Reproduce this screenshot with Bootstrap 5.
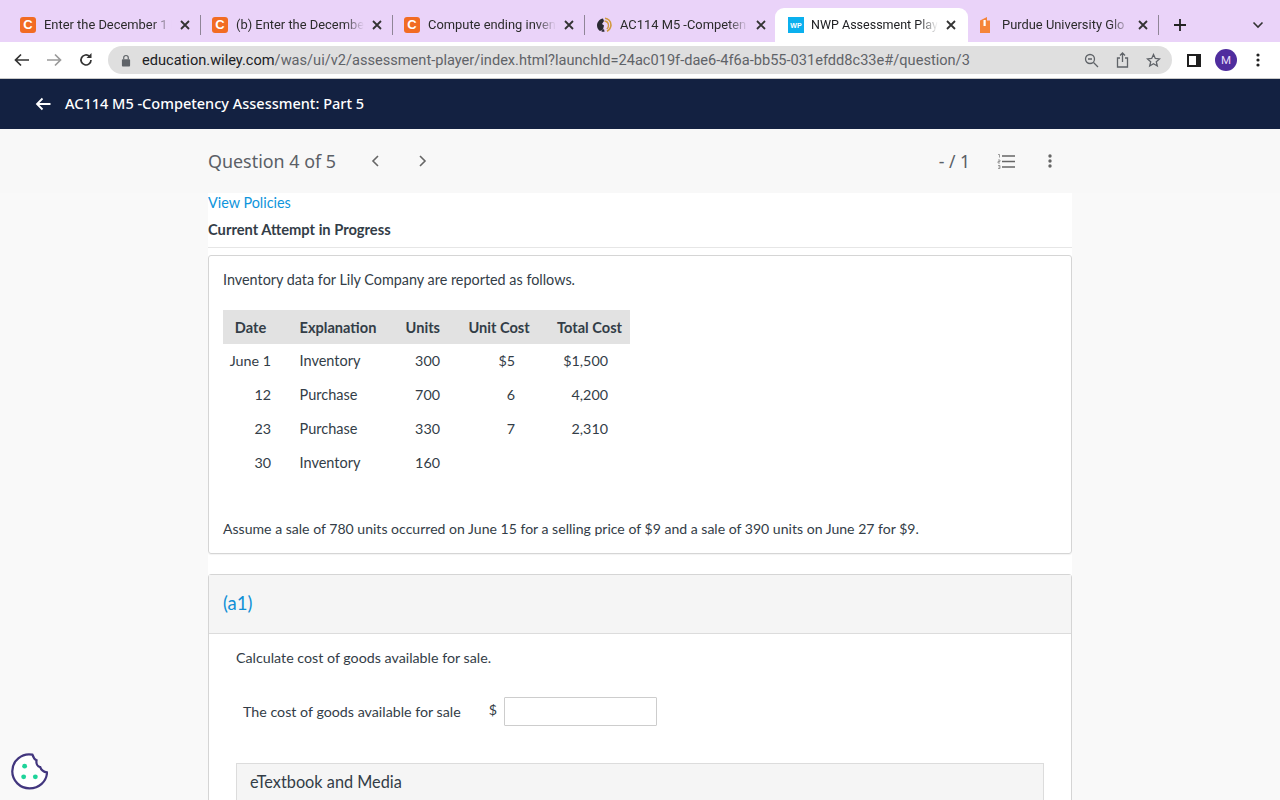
<!DOCTYPE html>
<html lang="en">
<head>
<meta charset="utf-8">
<title>NWP Assessment Player</title>
<link href="https://cdn.jsdelivr.net/npm/bootstrap@5.3.0/dist/css/bootstrap.min.css" rel="stylesheet">
<style>
html,body{height:800px;overflow:hidden}
body{background:#f9f9f9;font-family:Lato,sans-serif;color:#333d47;font-size:14.25px;position:relative}
.tabstrip{height:42px;background:#ead3f9;font-family:Roboto,sans-serif;font-size:12.9px;color:#2b2b2b;padding:8px 8px 0 9px}
.chrometab{width:191px;height:34px;padding:0 10px 0 11px;flex:none;position:relative}
.chrometab.on{background:#fff;border-radius:9px 9px 0 0;width:193px;margin-left:-1px;margin-right:-1px;color:#202124;padding-left:13px;padding-right:12px;font-size:12.5px}
.chrometab .ttl{flex:1;min-width:0;white-space:nowrap;overflow:hidden;margin-left:8px;-webkit-mask-image:linear-gradient(to right,#000 82%,transparent 97%);mask-image:linear-gradient(to right,#000 82%,transparent 97%)}
.chrometab.on .ttl{margin-left:7px}
.chrometab .xx{width:10px;height:10px;flex:none;margin-left:4px}
.chrometab.purdue{padding-left:13px}
.chrometab.purdue .ttl{margin-left:12px}
.tabsep{width:1px;height:20px;background:#8f8597;flex:none;align-self:center}
.favc{width:16px;height:16px;border-radius:3px;background:#f26c23;color:#fff;font-size:13px;font-weight:700;line-height:16px;text-align:center;flex:none;font-family:"Liberation Sans",sans-serif}
.favglobe{width:16px;height:16px;flex:none}
.favwp{width:16px;height:16px;flex:none}
.gapplus{margin-left:14px}
.addrrow{height:36px;background:#fff;padding:0 14px 0 14px}
.navfwd{margin-left:16px}
.navreload{margin-left:16px}
.omni{width:1064px;height:28px;border-radius:14px;background:#dfdfdf;font-family:Roboto,sans-serif;font-size:14.6px;color:#5f6368;padding:0 11px 0 13px;margin-left:14px;white-space:nowrap}
.omni b{font-weight:400;color:#202124}
.urltext{padding-top:1px}
.lockic{margin-right:11px}
.omnishare{margin:0 17px}
.panelic{margin-left:15px}
.avatar{width:22px;height:22px;border-radius:50%;background:#4f2d9e;color:#e6ddf8;font-size:11.5px;line-height:22px;text-align:center;font-family:Roboto,sans-serif;margin-left:14px}
.dotsic{margin-left:19px}
.divline{height:1px;background:#c9c9c9}
.appbar{height:50px;background:#132141;color:#fff;font-family:"Noto Sans",sans-serif;font-size:14.5px;font-weight:500;padding-left:35px}
.appback{margin-right:14px}
.qhead{height:64px;background:#f8f8f8;padding:0 208px}
.qtitle{font-family:"Noto Sans",sans-serif;font-size:17.9px;color:#5b6066;width:153px}
.nextic{margin-left:17px}
.qscore{font-family:"Noto Sans",sans-serif;font-size:17.5px;color:#5b6066;margin-left:auto;margin-right:27px}
.moreic{margin-left:33px;margin-right:20px}
.sheetwrap{width:864px;margin-left:208px;background:#fff;height:607px;overflow:hidden}
.polink{display:block;color:#0f95dc;text-decoration:none;line-height:20px;height:20px;font-size:14.4px}
.attempt{font-weight:700;font-size:14.7px;line-height:20px;margin-top:6px;padding-bottom:8px;border-bottom:1px solid #e6e6e6}
.promptbox{margin-top:7px;height:299px;border:1px solid #d5d5d5;border-radius:3px;padding:14px 13px 0 14px;box-shadow:0 1px 1px rgba(0,0,0,.05)}
.promptbox p{margin:0;line-height:20px}
.lead-in{font-size:14.38px}
.closing{font-size:14.07px}
.invtable{border-collapse:collapse;table-layout:fixed;width:407px;margin-top:20px;margin-bottom:39px;font-size:14.3px}
.invtable th{background:#e2e2e2;font-weight:700;height:34px;padding:1px 0 0;font-size:14.6px}
.invtable td{height:34px;padding:0}
.c1{width:55px}.c2{width:114px}.c3{width:62px}.c4{width:90px}.c5{width:86px}
.invtable .d1{text-align:right;padding-right:7px}
.invtable .d2{padding-left:21.5px}
.invtable td.d2{font-size:14.5px}
.invtable .d3{text-align:right;padding-right:14px}
.invtable .d4{text-align:right;padding-right:29px}
.invtable .d5{text-align:right;padding-right:22px}
.invtable th.d5h{text-align:right;padding-right:8px}
.partbox{margin-top:20px;border:1px solid #d5d5d5;border-radius:3px 3px 0 0;height:300px}
.parthead{height:59px;background:#f5f5f5;border-bottom:1px solid #dcdcdc;padding-left:14px;color:#0f8fd6;font-size:18.5px}
.partbody{padding:14px 27px 0 27px}
.partbody p{margin:0;line-height:20px}
.fillrow{margin-top:29px;padding-left:7px}
.dollarsign{margin-left:28px;margin-top:-4px}
.fillin{width:153px;height:29px;border:1px solid #cdcdcd;border-radius:1px;background:#fff;margin-left:7px}
.mediahd{margin-top:37px;height:60px;background:#f5f5f5;border:1px solid #dcdcdc;padding:6px 13px;font-size:16.3px;line-height:24px}
.cookie{position:absolute;left:11px;bottom:10px}
</style>
</head>
<body>
<div class="tabstrip d-flex">
  <div class="chrometab d-flex align-items-center"><span class="favc">C</span><span class="ttl">Enter the December 1 I</span><svg class="xx" viewBox="0 0 10 10"><path d="M1 1l8 8M9 1l-8 8" stroke="#333" stroke-width="1.8"/></svg></div>
  <div class="tabsep"></div>
  <div class="chrometab d-flex align-items-center"><span class="favc">C</span><span class="ttl">(b) Enter the Decembe</span><svg class="xx" viewBox="0 0 10 10"><path d="M1 1l8 8M9 1l-8 8" stroke="#333" stroke-width="1.8"/></svg></div>
  <div class="tabsep"></div>
  <div class="chrometab d-flex align-items-center"><span class="favc">C</span><span class="ttl">Compute ending inven</span><svg class="xx" viewBox="0 0 10 10"><path d="M1 1l8 8M9 1l-8 8" stroke="#333" stroke-width="1.8"/></svg></div>
  <div class="tabsep"></div>
  <div class="chrometab d-flex align-items-center"><svg class="favglobe" viewBox="0 0 16 16"><path d="M7 1.500C3.500 2 1 5 1 8.500c0 2.500 1.300 4.500 3 5.500l3-1.500 1-4-2-1.500 2-3z" fill="#2a2a33"/><path d="M5 14l3-2 .5 2.800c-1.300.2-2.500-.1-3.500-.8z" fill="#2a2a33"/><path d="M9 1.200c3 .5 6 3 6 7-.3 3-2 5-4 6" stroke="#d19a3e" stroke-width="1.600" fill="none"/><path d="M8.500 4c2.500.3 4 2.200 4 4.500 0 1.500-.7 2.700-1.700 3.500" stroke="#d19a3e" stroke-width="1.400" fill="none"/></svg><span class="ttl">AC114 M5 -Competen</span><svg class="xx" viewBox="0 0 10 10"><path d="M1 1l8 8M9 1l-8 8" stroke="#333" stroke-width="1.8"/></svg></div>
  <div class="chrometab on d-flex align-items-center"><svg class="favwp" viewBox="0 0 16 16"><rect width="16" height="16" fill="#0bb0ee"/><text x="8" y="10.500" font-size="7" font-weight="700" text-anchor="middle" fill="#fff" font-family="Liberation Sans">WP</text></svg><span class="ttl">NWP Assessment Play</span><svg class="xx" viewBox="0 0 10 10"><path d="M1 1l8 8M9 1l-8 8" stroke="#333" stroke-width="1.8"/></svg></div>
  <div class="chrometab purdue d-flex align-items-center"><svg width="10" height="16" viewBox="0 0 10 16" class="flex-none"><path d="M0 3.500L7 0v3.500h3V16H0z" fill="#f5853a"/><rect x="3.500" y="3" width="2.200" height="6" fill="#fff"/></svg><span class="ttl">Purdue University Glo</span><svg class="xx" viewBox="0 0 10 10"><path d="M1 1l8 8M9 1l-8 8" stroke="#333" stroke-width="1.8"/></svg></div>
  <div class="tabsep"></div>
  <svg class="align-self-center gapplus" width="14" height="14" viewBox="0 0 14 14"><path d="M7 1v12M1 7h12" stroke="#222" stroke-width="1.8"/></svg>
  <svg class="align-self-center ms-auto me-2" width="12" height="8" viewBox="0 0 12 8"><path d="M1.500 1.500L6 6l4.500-4.500" stroke="#333" stroke-width="1.600" fill="none"/></svg>
</div>
<div class="addrrow d-flex align-items-center">
  <svg width="16" height="14" viewBox="0 0 16 14"><path d="M15 7H2M7 1.500L1.500 7 7 12.500" stroke="#333" stroke-width="1.700" fill="none"/></svg>
  <svg class="navfwd" width="16" height="14" viewBox="0 0 16 14"><path d="M1 7h13M9 1.500L14.500 7 9 12.500" stroke="#9a9a9a" stroke-width="1.700" fill="none"/></svg>
  <svg class="navreload" width="16" height="16" viewBox="0 0 16 16"><path d="M13 8a5 5 0 1 1-1.500-3.600" stroke="#333" stroke-width="1.700" fill="none"/><path d="M13.500 1v5h-5z" fill="#333"/></svg>
  <div class="omni d-flex align-items-center">
    <svg class="lockic" width="10" height="13" viewBox="0 0 11 13"><rect x="1" y="5" width="9" height="8" rx="1" fill="#5f6368"/><path d="M3 5V3.500a2.500 2.500 0 0 1 5 0V5" stroke="#5f6368" fill="none" stroke-width="1.300"/></svg>
    <span class="urltext"><b>education.wiley.com</b>/was/ui/v2/assessment-player/index.html?launchId=24ac019f-dae6-4f6a-bb55-031efdd8c33e#/question/3</span>
    <svg class="ms-auto" width="15" height="15" viewBox="0 0 15 15"><circle cx="6" cy="6" r="4.500" stroke="#5f6368" stroke-width="1.300" fill="none"/><path d="M9.500 9.500L14 14M4 6h4" stroke="#5f6368" stroke-width="1.300"/></svg>
    <svg class="omnishare" width="13" height="16" viewBox="0 0 13 16"><path d="M4 6H1.500v9h10V6H9M6.500 10V1M4 3.500L6.500 1 9 3.500" stroke="#5f6368" stroke-width="1.300" fill="none"/></svg>
    <svg width="15" height="15" viewBox="0 0 15 15"><path d="M7.500 1.500l1.800 4 4.300.4-3.300 2.900 1 4.200-3.800-2.300-3.800 2.300 1-4.200-3.300-2.900 4.300-.4z" stroke="#5f6368" stroke-width="1.300" fill="none"/></svg>
  </div>
  <svg class="panelic" width="14" height="13" viewBox="0 0 14 13"><rect width="14" height="13" fill="#1f1f1f"/><rect x="2" y="2" width="7" height="9" fill="#fff"/></svg>
  <div class="avatar">M</div>
  <svg class="dotsic" width="4" height="14" viewBox="0 0 4 14"><circle cx="2" cy="2" r="1.600" fill="#222"/><circle cx="2" cy="7" r="1.600" fill="#222"/><circle cx="2" cy="12" r="1.600" fill="#222"/></svg>
</div>
<div class="divline"></div>
<div class="appbar d-flex align-items-center">
  <svg class="appback" width="16" height="14" viewBox="0 0 16 14"><path d="M15.500 7H2M7.500 1.500L2 7l5.500 5.500" stroke="#fff" stroke-width="1.800" fill="none"/></svg>
  <span>AC114 M5 -Competency Assessment: Part 5</span>
</div>
<div class="qhead d-flex align-items-center">
  <div class="qtitle">Question 4 of 5</div>
  <svg width="30" height="14" viewBox="0 0 30 14"><path d="M17 2l-5 5 5 5" stroke="#666" stroke-width="1.600" fill="none"/></svg>
  <svg class="nextic" width="30" height="14" viewBox="0 0 30 14"><path d="M12 2l5 5-5 5" stroke="#666" stroke-width="1.600" fill="none"/></svg>
  <div class="qscore">- / 1</div>
  <svg width="18" height="15" viewBox="0 0 18 15"><path d="M5 2h13M5 7.500h13M5 13h13" stroke="#666" stroke-width="1.300"/><path d="M1 .5h1.500v3M1 6h2v1.500H1V9h2M1 11.500h2v3H1M1.500 13H3" stroke="#777" stroke-width=".7" fill="none"/></svg>
  <svg class="moreic" width="4" height="14" viewBox="0 0 4 14"><circle cx="2" cy="2" r="1.700" fill="#666"/><circle cx="2" cy="7" r="1.700" fill="#666"/><circle cx="2" cy="12" r="1.700" fill="#666"/></svg>
</div>
<div class="sheetwrap">
  <a class="polink" href="#">View Policies</a>
  <div class="attempt">Current Attempt in Progress</div>
  <div class="promptbox">
    <p class="lead-in">Inventory data for Lily Company are reported as follows.</p>
    <table class="invtable">
      <thead><tr><th class="c1 text-center">Date</th><th class="c2 d2">Explanation</th><th class="c3 d3">Units</th><th class="c4 text-center">Unit Cost</th><th class="c5 d5h">Total Cost</th></tr></thead>
      <tbody>
        <tr><td class="d1">June 1</td><td class="d2">Inventory</td><td class="d3">300</td><td class="d4">$5</td><td class="d5">$1,500</td></tr>
        <tr><td class="d1">12</td><td class="d2">Purchase</td><td class="d3">700</td><td class="d4">6</td><td class="d5">4,200</td></tr>
        <tr><td class="d1">23</td><td class="d2">Purchase</td><td class="d3">330</td><td class="d4">7</td><td class="d5">2,310</td></tr>
        <tr><td class="d1">30</td><td class="d2">Inventory</td><td class="d3">160</td><td></td><td></td></tr>
      </tbody>
    </table>
    <p class="closing">Assume a sale of 780 units occurred on June 15 for a selling price of $9 and a sale of 390 units on June 27 for $9.</p>
  </div>
  <div class="partbox">
    <div class="parthead d-flex align-items-center">(a1)</div>
    <div class="partbody">
      <p>Calculate cost of goods available for sale.</p>
      <div class="fillrow d-flex align-items-center">
        <span>The cost of goods available for sale</span>
        <span class="dollarsign">$</span>
        <span class="fillin"></span>
      </div>
      <div class="mediahd">eTextbook and Media</div>
    </div>
  </div>
</div>
<svg class="cookie" width="37" height="38" viewBox="0 0 38 38"><path d="M22 2.200c1 3 2.200 5 4.200 5.800-.5 3.500 1 6.500 3.800 7 1 3 3.800 5 7 5.500C36.500 30 28.800 36.800 19 36.800 9.300 36.800 1.300 29 1.300 19.300 1.300 8.500 11 .2 22 2.200z" fill="#fff" stroke="#42367e" stroke-width="2.300"/><circle cx="14" cy="14" r="2.500" fill="#1ed49a"/><circle cx="13" cy="25" r="2.500" fill="#1ed49a"/><circle cx="25" cy="25" r="2.500" fill="#1ed49a"/></svg>
<script src="https://cdn.jsdelivr.net/npm/bootstrap@5.3.0/dist/js/bootstrap.bundle.min.js"></script>
</body>
</html>
